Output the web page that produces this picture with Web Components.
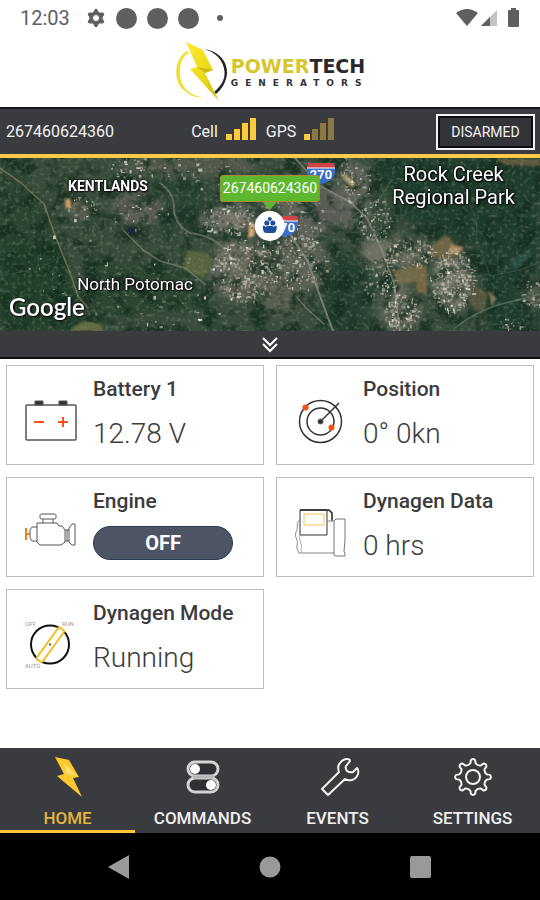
<!DOCTYPE html>
<html lang="en">
<head>
<meta charset="utf-8">
<meta name="viewport" content="width=device-width, initial-scale=1">
<title>PowerTech Generators</title>
<style>
    body { margin: 0; background: #fff; }
</style>
</head>
<body>
<pt-app></pt-app>

<script>
// outline of a cog wheel as an svg path
function gearPath(cx, cy, teeth, outer, inner) {
    const step = Math.PI * 2 / teeth;
    const pt = (r, a) => `${(cx + r * Math.cos(a)).toFixed(2)} ${(cy + r * Math.sin(a)).toFixed(2)}`;
    let d = '';
    for (let i = 0; i < teeth; i++) {
        const a = i * step - Math.PI / 2;
        d += `${i ? 'L' : 'M'}${pt(inner, a - step * 0.24)}`;
        d += `L${pt(outer - 1, a - step * 0.16)}`;
        d += `Q${pt(outer + 1, a)} ${pt(outer - 1, a + step * 0.16)}`;
        d += `L${pt(inner, a + step * 0.24)}`;
        d += `Q${pt(inner - 2, a + step * 0.5)} ${pt(inner, a + step * 0.76)}`;
    }
    return d + 'Z';
}

class PtStatusBar extends HTMLElement {

    constructor() {
        super();
        this.root = this.attachShadow({mode:'open'});
    }

    connectedCallback() {
        this.root.innerHTML = `
        <style>
        :host {
            display: flex;
            align-items: center;
            justify-content: space-between;
            height: 36px;
            padding: 0 20px;
            color: #5f5f5f;
            font-size: 20px;
        }
        div { display: flex; align-items: center; gap: 10px; }
        time { margin-right: 6px; }
        svg { display: block; fill: #5f5f5f; }
        i { width: 21px; height: 21px; border-radius: 50%; background: #5f5f5f; }
        i.small { width: 6px; height: 6px; margin-left: 8px; }
        </style>
        <div>
            <time>12:03</time>
            <svg width="20" height="20" viewBox="0 0 20 20">
                <path fill-rule="evenodd" stroke="#5f5f5f" stroke-linejoin="round" d="${gearPath(10, 10, 6, 9, 7)}M10 6.500a3.500 3.500 0 1 0 0 7a3.500 3.500 0 1 0 0-7Z"/>
            </svg>
            <i></i><i></i><i></i><i class="small"></i>
        </div>
        <svg width="64" height="20" viewBox="0 0 64 20">
            <path d="M0 5Q11 -3 22 5L11 18Z"/>
            <path d="M41 2V18H25Z" fill="#c4c4c4"/>
            <path d="M34 9V18H25Z"/>
            <path d="M55 2V0h5v2h2q1 0 1 1v15q0 1-1 1h-9q-1 0-1-1V3q0-1 1-1Z"/>
        </svg>
        `;
    }
}

class PtBrand extends HTMLElement {

    constructor() {
        super();
        this.root = this.attachShadow({mode:'open'});
    }

    connectedCallback() {
        this.root.innerHTML = `
        <style>
        :host {
            display: flex;
            align-items: center;
            justify-content: center;
            gap: 2px;
            height: 71px;
            font-family: "DejaVu Sans", sans-serif;
        }
        svg { display: block; }
        .name { font-size: 19px; line-height: 23px; font-weight: bold; color: #2a2a2c; }
        .name b { color: #d8c62e; }
        .sub { font-size: 9px; line-height: 11px; letter-spacing: 7px; color: #333; font-weight: bold; margin-right: -7px; }
        </style>
        <svg width="54" height="62" viewBox="0 0 54 62">
            <defs>
                <linearGradient id="bolt" x1="0" y1="0" x2="1" y2="1">
                    <stop offset="0" stop-color="#ffe92e"/>
                    <stop offset=".5" stop-color="#eedb1c"/>
                    <stop offset="1" stop-color="#d2bd10"/>
                </linearGradient>
            </defs>
            <path d="M12 10C-2 18 -2 42 10 50C15 55 21 57 27 56C12 54 4 43 5 30C5 21 8 15 14 12Z" fill="#f2df35"/>
            <path d="M29 8C44 10 53 21 52 33C51 42 46 49 41 53L39 51C47 44 50 38 49.500 31C49 20 41 11 29 8Z" fill="#232427"/>
            <path d="M11 1L28 9L38 29L30 32L44 60L15 28L22 26Z" fill="url(#bolt)"/>
            <path d="M22 26L38 29L30 32Z" fill="#cdb80f"/>
        </svg>
        <div>
            <div class="name"><b>POWER</b>TECH</div>
            <div class="sub">GENERATORS</div>
        </div>
        `;
    }
}

class PtSignal extends HTMLElement {

    constructor() {
        super();
        this.root = this.attachShadow({mode:'open'});
    }

    connectedCallback() {
        const level = Number(this.getAttribute('level'));
        const bars = [6, 11, 17, 22].map((h, i) =>
            `<rect x="${i * 8}" y="${22 - h}" width="6" height="${h}" fill="${i < level ? '#fcca3f' : '#8c7840'}"/>`);
        this.root.innerHTML = `
        <style>
        :host { display: flex; align-items: center; gap: 8px; }
        svg { display: block; margin-top: -6px; }
        </style>
        <slot></slot>
        <svg width="30" height="22" viewBox="0 0 30 22">${bars.join('')}</svg>
        `;
    }
}

class PtDeviceBar extends HTMLElement {

    constructor() {
        super();
        this.root = this.attachShadow({mode:'open'});
    }

    connectedCallback() {
        this.root.innerHTML = `
        <style>
        :host {
            display: grid;
            grid-template-columns: 35% 1fr auto;
            align-items: center;
            height: 45px;
            padding: 0 5px 0 6px;
            background: #3a3b3f;
            border-top: 2px solid #17181b;
            border-bottom: 4px solid #fcca46;
            color: #f2f2f2;
            font-size: 16px;
        }
        .signals { display: flex; gap: 10px; }
        button {
            font: inherit;
            font-size: 14px;
            width: 99px;
            height: 36px;
            padding: 0;
            color: #f2f2f2;
            background: #333438;
            border: 2px solid #f2f2f5;
            box-shadow: inset 0 0 0 2px #0c0c12;
        }
        </style>
        <span>267460624360</span>
        <div class="signals">
            <pt-signal level="4">Cell</pt-signal>
            <pt-signal level="1">GPS</pt-signal>
        </div>
        <button type="button">DISARMED</button>
        `;
    }
}

class PtMap extends HTMLElement {

    constructor() {
        super();
        this.root = this.attachShadow({mode:'open'});
    }

    // small fixed-seed generator so the rooftops stay put between loads
    rooftops() {
        let seed = 77;
        const rnd = () => (seed = (seed * 16807) % 2147483647) / 2147483647;
        const colors = ['#d9d6cd', '#b5b1a5', '#f0efea', '#989588', '#c4b9a2', '#4c5246', '#3a4338'];
        // x, y, radius x, radius y, count
        const towns = [
            [80, 50, 18, 12, 40], [140, 55, 28, 18, 60], [136, 10, 26, 12, 50],
            [195, 14, 36, 16, 50], [228, 62, 28, 16, 130], [246, 112, 36, 32, 400],
            [290, 60, 34, 38, 240], [300, 105, 28, 28, 160], [355, 20, 18, 26, 110],
            [375, 62, 16, 22, 130], [410, 95, 24, 16, 130], [452, 122, 22, 32, 420],
            [380, 120, 20, 20, 110], [402, 155, 18, 20, 200], [534, 135, 14, 14, 50],
            [510, 166, 12, 6, 25], [130, 110, 110, 50, 60], [175, 150, 60, 25, 40]
        ];
        let out = '';
        towns.forEach(([x, y, rx, ry, n]) => {
            for (let i = 0; i < n; i++) {
                const a = rnd() * Math.PI * 2;
                const r = Math.sqrt(rnd());
                const w = (0.8 + rnd() * rnd() * 4).toFixed(1);
                const h = (0.8 + rnd() * rnd() * 3.6).toFixed(1);
                const px = (x + Math.cos(a) * r * rx).toFixed(1);
                const py = (y + Math.sin(a) * r * ry).toFixed(1);
                const c = colors[Math.floor(rnd() * colors.length)];
                out += `<rect x="${px}" y="${py}" width="${w}" height="${h}" fill="${c}" opacity="${(0.35 + rnd() * 0.6).toFixed(2)}"/>`;
            }
        });
        return out;
    }

    shield(x, y) {
        return `
        <g transform="translate(${x} ${y})">
            <path d="M1 0H27Q30 10 25 16Q20 20 14 21Q8 20 3 16Q-2 10 1 0Z" fill="#3a70c8"/>
            <path d="M1 0H27L28 5H0Z" fill="#cf4545"/>
            <path d="M0 5H28" stroke="#fff" stroke-width="1"/>
            <text x="14" y="16" text-anchor="middle" font-size="13" font-weight="700" fill="#fff">270</text>
        </g>`;
    }

    connectedCallback() {
        this.root.innerHTML = `
        <style>
        :host {
            display: block;
            position: relative;
            height: 173px;
            overflow: hidden;
            color: #fff;
        }
        .ground { display: block; width: 100%; height: 100%; }
        .place {
            position: absolute;
            transform: translate(-50%, -50%);
            white-space: nowrap;
            text-align: center;
            text-shadow: 0 0 2px #000, 0 0 2px #000, 1px 1px 2px #000;
            font-size: 17px;
            line-height: 23px;
        }
        .area { font-size: 14px; font-weight: 700; }
        .park { font-size: 20px; }
        .google {
            position: absolute;
            left: 9px;
            bottom: 8px;
            font: 600 24px/32px Lato, sans-serif;
            text-shadow: 0 0 2px #222, 1px 1px 2px #000;
        }
        .marker {
            position: absolute;
            left: 50%;
            top: 17px;
            transform: translateX(-50%);
            display: flex;
            flex-direction: column;
            align-items: center;
        }
        .label {
            padding: 0 2px;
            border: 1px solid #a98d35;
            border-radius: 3px;
            background: #5db82f;
            font-size: 14px;
            line-height: 25px;
        }
        .marker svg { display: block; }
        </style>
        <svg class="ground" viewBox="0 0 540 173" preserveAspectRatio="xMidYMid slice" aria-hidden="true">
            <defs>
                <filter id="soft" x="-20%" y="-20%" width="140%" height="140%" color-interpolation-filters="sRGB"><feGaussianBlur stdDeviation="5"/></filter>
                <filter id="edge"><feGaussianBlur stdDeviation="1"/></filter>
                <filter id="roofs"><feGaussianBlur stdDeviation=".35"/></filter>
                <filter id="coarse" x="0" y="0" width="100%" height="100%" color-interpolation-filters="sRGB">
                    <feTurbulence type="fractalNoise" baseFrequency=".06" numOctaves="5" seed="8"/>
                    <feColorMatrix values="0 0 0 0 .07  0 0 0 0 .17  0 0 0 0 .11  4 0 0 0 -1.8"/>
                </filter>
                <filter id="fine" x="0" y="0" width="100%" height="100%" color-interpolation-filters="sRGB">
                    <feTurbulence type="fractalNoise" baseFrequency=".25" numOctaves="3" seed="3"/>
                    <feColorMatrix values="0 0 0 0 .52  0 0 0 0 .57  0 0 0 0 .48  0 3 0 0 -1.5"/>
                </filter>
            </defs>
            <rect width="540" height="173" fill="#384c3c"/>
            <g filter="url(#soft)">
                <path d="M375 0H540V173H485L480 90L400 60Z" fill="#1f3d2d"/>
                <path d="M335 95L370 100L365 173H320Z" fill="#233e2e"/>
                <path d="M0 80L60 90L90 173H0Z" fill="#213f2b"/>
                <path d="M0 20L40 40L60 90L0 80Z" fill="#294431"/>
                <path d="M150 20L210 25L200 60L160 80Z" fill="#2a4434"/>
                <path d="M90 100L190 110L210 150L100 160Z" fill="#2c4532"/>
                <ellipse cx="138" cy="50" rx="26" ry="17" fill="#5d5e54"/>
                <ellipse cx="80" cy="50" rx="14" ry="9" fill="#66665a"/>
                <ellipse cx="190" cy="8" rx="70" ry="10" fill="#535a4d"/>
                <ellipse cx="240" cy="112" rx="32" ry="30" fill="#6a6b5f"/>
                <ellipse cx="230" cy="62" rx="28" ry="14" fill="#74736a"/>
                <ellipse cx="300" cy="50" rx="40" ry="34" fill="#5d6158"/>
                <ellipse cx="335" cy="50" rx="24" ry="18" fill="#585b54"/>
                <ellipse cx="300" cy="105" rx="26" ry="30" fill="#5c6155"/>
                <ellipse cx="280" cy="140" rx="20" ry="18" fill="#5a5f51"/>
                <ellipse cx="355" cy="40" rx="18" ry="36" fill="#5f635a"/>
                <ellipse cx="390" cy="95" rx="36" ry="16" fill="#6d7063"/>
                <ellipse cx="452" cy="125" rx="20" ry="28" fill="#77796d"/>
                <ellipse cx="400" cy="150" rx="20" ry="26" fill="#63675b"/>
                <ellipse cx="532" cy="135" rx="12" ry="16" fill="#5c6455"/>
            </g>
            <rect width="540" height="173" filter="url(#coarse)" opacity=".75"/>
            <g filter="url(#edge)">
                <path d="M187 92L208 95L212 104L204 120L183 112Z" fill="#58653f"/>
                <path d="M427 91L446 77L458 90L450 102L430 98Z" fill="#6e6547"/>
                <path d="M451 87L464 89L458 97L449 96Z" fill="#b08d5e"/>
                <path d="M393 113L424 107L427 122L398 127Z" fill="#6f6a46"/>
                <path d="M414 105L427 109V137L417 133Z" fill="#766643"/>
                <path d="M470 125L488 135L484 155L470 148Z" fill="#575640"/>
                <path d="M488 132L496 140L492 149Z" fill="#85765a"/>
                <path d="M250 64L255 66L254 78L248 80Z" fill="#dcae78"/>
                <path d="M65 42L70 40L71 49L66 51Z" fill="#d79f62"/>
                <path d="M72 170L84 163L100 166L104 173H70Z" fill="#626a3f"/>
                <path d="M345 14L356 26L352 30L342 20Z" fill="#a08c62"/>
                <path d="M495 1H540V8L505 7Z" fill="#5f5a3f"/>
                <path d="M510 105L528 92L532 97L516 112Z" fill="#2a4f42"/>
                <path d="M129 69L137 71L134 77L128 75Z" fill="#18233a"/>
            </g>
            <g fill="none" stroke-linecap="round">
                <path d="M0 10L20 24L44 46L56 80L69 112L78 138L88 150" stroke="#8a7d5f" stroke-width="1.500" opacity=".7"/>
                <path d="M123 72L143 92L160 103L185 110L205 126" stroke="#8a8d7c" stroke-width="1.500" opacity=".6"/>
                <path d="M160 25Q174 34 174 50Q174 66 190 75Q218 78 230 99L236 120" stroke="#75796c" stroke-width="2" opacity=".7"/>
                <path d="M295 0L320 28L350 44L367 60L381 90L394 125L400 173" stroke="#8f8e85" stroke-width="2" opacity=".65"/>
                <path d="M290 76L308 104L320 138L333 173" stroke="#8f9088" stroke-width="2" opacity=".75"/>
                <path d="M296 138L306 150L324 166" stroke="#8c8d80" stroke-width="1.500" opacity=".6"/>
                <path d="M455 170Q480 150 510 144L540 136" stroke="#5c7362" stroke-width="1.300" opacity=".8"/>
                <path d="M350 60L380 40L392 22" stroke="#536a58" stroke-width="1.200" opacity=".7"/>
                <path d="M466 42Q480 60 476 80L490 118L520 112L540 104" stroke="#3f5a4b" stroke-width="1.200" opacity=".6"/>
                <path d="M0 118L40 110L80 88L120 88" stroke="#435a49" stroke-width="1.200" opacity=".6"/>
            </g>
            <g filter="url(#roofs)">${this.rooftops()}</g>
            <rect width="540" height="173" filter="url(#fine)" opacity=".4"/>
            ${this.shield(307, 5)}
            ${this.shield(270, 58)}
        </svg>
        <span class="place area" style="left:20%;top:16%">KENTLANDS</span>
        <span class="place" style="left:25%;top:73%">North Potomac</span>
        <span class="place park" style="left:84%;top:16%">Rock Creek<br>Regional Park</span>
        <span class="google">Google</span>
        <div class="marker">
            <span class="label">267460624360</span>
            <svg width="32" height="40" viewBox="0 0 32 40">
                <path d="M9 0H23L16 8Z" fill="#5db82f"/>
                <circle cx="16" cy="24" r="15" fill="#fff"/>
                <path d="M9 24q2-1 3 1q2-2 4-1q2-1 4 1q1-2 3-1q0 7-3 7h-8q-3 0-3-7Z" fill="#1d4e9e"/>
                <circle cx="13" cy="21" r="2.500" fill="#1d4e9e"/>
                <circle cx="19" cy="21" r="2.500" fill="#1d4e9e"/>
                <circle cx="16" cy="17" r="2" fill="#1d4e9e"/>
            </svg>
        </div>
        `;
    }
}

class PtMapToggle extends HTMLElement {

    constructor() {
        super();
        this.root = this.attachShadow({mode:'open'});
    }

    connectedCallback() {
        this.root.innerHTML = `
        <style>
        :host { display: block; background: #3a3b3f; border-bottom: 2px solid #111; }
        button {
            display: flex;
            align-items: center;
            justify-content: center;
            width: 100%;
            height: 26px;
            padding: 0;
            border: 0;
            background: none;
        }
        </style>
        <button type="button" aria-label="Expand map">
            <svg width="18" height="18" viewBox="0 0 18 18" fill="none" stroke="#fff" stroke-width="2">
                <path d="M2 3L9 10L16 3M2 9L9 16L16 9"/>
            </svg>
        </button>
        `;
    }
}

const CARD_ICONS = {
    battery: `
        <rect x="3" y="13" width="50" height="35" rx="1" stroke-width="1.500"/>
        <path d="M12 9h8v4h-8ZM36 9h8v4h-8Z" fill="#333"/>
        <path d="M11 30h10M35 30h10M40 25v10" stroke="#f4511e" stroke-width="2"/>`,
    position: `
        <circle cx="27.500" cy="29.500" r="21" stroke="#333" stroke-width="1.500"/>
        <circle cx="27.500" cy="29.500" r="13.500" stroke="#333" stroke-width="1.500"/>
        <path d="M27.500 29.500L46 11" stroke="#333" stroke-width="1.500"/>
        <circle cx="27.500" cy="29.500" r="2.500" fill="#333"/>
        <circle cx="12.500" cy="15.500" r="3" fill="#f4510f" stroke="none"/>
        <circle cx="38.500" cy="35.500" r="3" fill="#f4510f" stroke="none"/>`,
    engine: `
        <rect x="17" y="10" width="16" height="5" rx="1.500"/>
        <path d="M20 15v4M30 15v4M14 19H34L36 22H39L42 26V38L38 41H17L14 38Z"/>
        <path d="M14 23H9L7 26V34L9 37H14M42 26h4M42 37h4M44 26V37M46 24L49 20H52V41H49L46 38Z"/>
        <path d="M3 24V36M3 30H7" stroke="#f47a1e" stroke-width="2"/>`,
    generator: `
        <path d="M7 6H34V31H7Z" stroke="#333"/>
        <path d="M7 6H36L39 9V17" stroke="#222" stroke-width="1.500"/>
        <rect x="11" y="10" width="20" height="11" stroke="#f3c552"/>
        <path d="M7 16C2 18 6 24 3 28C1 34 6 36 4 41C3 45 6 48 6 49H41M34 17H41" stroke="#888"/>
        <path d="M7 31C5 36 10 40 8 45L9 49" stroke="#aaa"/>
        <path d="M41 17V51L43 52H52V50L51 47L52 36V15H43Z" stroke="#777"/>`,
    mode: `
        <circle cx="27" cy="28.500" r="19" stroke="#111" stroke-width="2"/>
        <rect x="24" y="9" width="7" height="39" rx="2" transform="rotate(36 27 28.500)" fill="#fff" stroke="#f4bf26" stroke-width="2"/>
        <circle cx="27" cy="28.500" r="1" fill="#333" stroke="none"/>
        <g fill="#999" stroke="none" font-size="6">
            <text x="2" y="10">OFF</text>
            <text x="39" y="10">RUN</text>
            <text x="2" y="52">AUTO</text>
        </g>`
};

class PtCard extends HTMLElement {

    constructor() {
        super();
        this.root = this.attachShadow({mode:'open'});
    }

    connectedCallback() {
        this.root.innerHTML = `
        <style>
        :host {
            display: flex;
            gap: 14px;
            height: 100px;
            box-sizing: border-box;
            padding: 11px 16px;
            border: 1px solid #bdbdbd;
            background: #fff;
            color: #3c3c3e;
        }
        svg { display: block; flex: none; margin-top: 15px; }
        h2 { margin: 0 0 13px; font-size: 21px; line-height: 24px; font-weight: 500; white-space: nowrap; }
        ::slotted(*) { display: block; font-size: 28px; line-height: 40px; font-weight: 300; }
        </style>
        <svg width="56" height="56" viewBox="0 0 56 56" fill="none" stroke="#555">${CARD_ICONS[this.getAttribute('icon')]}</svg>
        <div>
            <h2>${this.getAttribute('label')}</h2>
            <slot></slot>
        </div>
        `;
    }
}

class PtSwitch extends HTMLElement {

    constructor() {
        super();
        this.root = this.attachShadow({mode:'open'});
    }

    connectedCallback() {
        this.root.innerHTML = `
        <style>
        :host { display: block; }
        button {
            display: block;
            width: 140px;
            height: 34px;
            padding: 0;
            border: 1px solid #2c3d58;
            border-radius: 17px;
            background: #4d5463;
            color: #fff;
            font: inherit;
            font-size: 20px;
            line-height: 32px;
            font-weight: 700;
        }
        </style>
        <button type="button"><slot></slot></button>
        `;
    }
}

const TAB_ICONS = {
    home: `
        <path d="M9 2L23 5L33 22L27 23L36 42L11 21L18 19Z" fill="#fdc92f"/>
        <path d="M18 8L31 21L20 19Z" fill="#ffdf6b"/>`,
    commands: `
        <rect x="7" y="7" width="30" height="14" rx="7" stroke="#d4d4d6" stroke-width="3" fill="#2f3034"/>
        <rect x="7" y="23" width="30" height="14" rx="7" stroke="#d4d4d6" stroke-width="3" fill="#2f3034"/>
        <path d="M12 22H32" stroke="#b5b5b8" stroke-width="3"/>
        <circle cx="14" cy="14" r="5" fill="#fff"/>
        <circle cx="30" cy="30" r="5" fill="#fff"/>`,
    events: `
        <path d="M6 34L23 17Q21 11 24 8Q27 4 31 4Q34 4 34 6L30 11Q29 13 31 16Q34 18 37 17L41 13Q43 15 42 19Q40 24 36 25Q32 26 29 24L12 40Z" stroke="#f4f4f4" stroke-width="2" stroke-linejoin="round"/>`,
    settings: `
        <path d="${gearPath(22, 22, 8, 18, 14)}" stroke="#f4f4f4" stroke-width="2" stroke-linejoin="round"/>
        <circle cx="22" cy="22" r="7" stroke="#f4f4f4" stroke-width="2"/>`
};

class PtTab extends HTMLElement {

    constructor() {
        super();
        this.root = this.attachShadow({mode:'open'});
    }

    connectedCallback() {
        const name = this.getAttribute('name');
        this.root.innerHTML = `
        <style>
        :host { display: block; color: #f0f0f0; }
        a {
            display: flex;
            flex-direction: column;
            align-items: center;
            box-sizing: border-box;
            height: 85px;
            padding-top: 7px;
            border-bottom: 3px solid transparent;
            color: inherit;
            text-decoration: none;
            font-size: 17px;
            line-height: 20px;
            font-weight: 500;
        }
        svg { display: block; margin-bottom: 9px; }
        :host([active]) a { color: #e3b53c; border-color: #fcc63a; }
        </style>
        <a href="#${name}">
            <svg width="44" height="44" viewBox="0 0 44 44" fill="none">${TAB_ICONS[name]}</svg>
            <slot></slot>
        </a>
        `;
    }
}

class PtSystemNav extends HTMLElement {

    constructor() {
        super();
        this.root = this.attachShadow({mode:'open'});
    }

    connectedCallback() {
        this.root.innerHTML = `
        <style>
        :host {
            display: grid;
            grid-template-columns: repeat(3, 1fr);
            justify-items: center;
            align-items: center;
            height: 67px;
            padding: 0 8%;
            background: #000;
        }
        button { padding: 12px; border: 0; background: none; }
        svg { display: block; fill: #999; }
        </style>
        <button type="button" aria-label="Back"><svg width="24" height="24" viewBox="0 0 24 24"><path d="M1 12L22 0V24Z"/></svg></button>
        <button type="button" aria-label="Home"><svg width="24" height="24" viewBox="0 0 24 24"><circle cx="12" cy="12" r="10.500"/></svg></button>
        <button type="button" aria-label="Recent apps"><svg width="24" height="24" viewBox="0 0 24 24"><rect x="1" y="1" width="21" height="22" rx="2"/></svg></button>
        `;
    }
}

class PtApp extends HTMLElement {

    constructor() {
        super();
        this.root = this.attachShadow({mode:'open'});
    }

    connectedCallback() {
        this.root.innerHTML = `
        <style>
        :host {
            display: flex;
            flex-direction: column;
            min-height: 100vh;
            font-family: Roboto, sans-serif;
        }
        main {
            flex: 1;
            display: grid;
            grid-template-columns: 1fr 1fr;
            align-content: start;
            gap: 12px;
            padding: 6px;
        }
        nav {
            display: grid;
            grid-template-columns: repeat(4, 1fr);
            background: #3a3b3f;
        }
        </style>
        <pt-status-bar></pt-status-bar>
        <pt-brand></pt-brand>
        <pt-device-bar></pt-device-bar>
        <pt-map></pt-map>
        <pt-map-toggle></pt-map-toggle>
        <main>
            <pt-card icon="battery" label="Battery 1"><span>12.78 V</span></pt-card>
            <pt-card icon="position" label="Position"><span>0° 0kn</span></pt-card>
            <pt-card icon="engine" label="Engine"><pt-switch>OFF</pt-switch></pt-card>
            <pt-card icon="generator" label="Dynagen Data"><span>0 hrs</span></pt-card>
            <pt-card icon="mode" label="Dynagen Mode"><span>Running</span></pt-card>
        </main>
        <nav>
            <pt-tab name="home" active>HOME</pt-tab>
            <pt-tab name="commands">COMMANDS</pt-tab>
            <pt-tab name="events">EVENTS</pt-tab>
            <pt-tab name="settings">SETTINGS</pt-tab>
        </nav>
        <pt-system-nav></pt-system-nav>
        `;
    }
}

customElements.define('pt-status-bar', PtStatusBar);
customElements.define('pt-brand', PtBrand);
customElements.define('pt-signal', PtSignal);
customElements.define('pt-device-bar', PtDeviceBar);
customElements.define('pt-map', PtMap);
customElements.define('pt-map-toggle', PtMapToggle);
customElements.define('pt-card', PtCard);
customElements.define('pt-switch', PtSwitch);
customElements.define('pt-tab', PtTab);
customElements.define('pt-system-nav', PtSystemNav);
customElements.define('pt-app', PtApp);
</script>
</body>
</html>
